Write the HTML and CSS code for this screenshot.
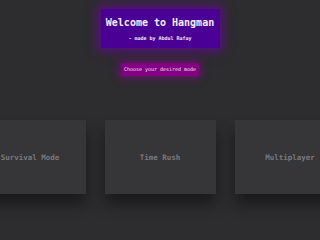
FILE: index.html
```html
<!DOCTYPE html>
<html>
<head>
<meta charset="utf-8">
<link rel="stylesheet" href="styles.css">
</head>
<body>
<header class="header">
  <div class="title-box">
    <h1 class="title">Welcome to Hangman</h1>
    <p class="subtitle">- made by Abdul Rafay</p>
  </div>
  <button class="mode-btn">Choose your desired mode</button>
</header>
<main class="cards">
  <div class="card">Survival Mode</div>
  <div class="card">Time Rush</div>
  <div class="card">Multiplayer</div>
</main>
</body>
</html>
```
FILE: styles.css
```css
html, body {
  margin: 0;
  padding: 0;
  height: 100%;
  overflow: hidden;
}
body {
  background: #2d2c2f;
  font-family: "DejaVu Sans Mono", "Liberation Mono", monospace;
}
.header {
  display: flex;
  flex-direction: column;
  align-items: center;
  padding-top: 9px;
}
.title-box {
  width: 119px;
  height: 39px;
  box-sizing: border-box;
  background: #4a0094;
  box-shadow: 0 0 10px 3px rgba(110, 0, 170, 0.7);
  display: flex;
  flex-direction: column;
  align-items: center;
  padding-top: 8px;
}
.title {
  margin: 0;
  font-size: 10px;
  line-height: 12px;
  font-weight: bold;
  color: #f4eef8;
}
.subtitle {
  margin: 6px 0 0;
  font-size: 5px;
  line-height: 6px;
  font-weight: bold;
  color: #f0e8f4;
}
.mode-btn {
  margin-top: 15px;
  height: 13px;
  padding: 0 3px;
  border: none;
  background: #830085;
  color: #f2e6f2;
  font-family: inherit;
  font-size: 5px;
  line-height: 13px;
  box-shadow: 0 0 8px 2px rgba(140, 0, 150, 0.6);
}
.cards {
  display: flex;
  justify-content: center;
  gap: 19px;
  margin-top: 44px;
}
.card {
  flex: 0 0 111px;
  height: 74px;
  background: #363538;
  box-shadow: 0 10px 14px rgba(0, 0, 0, 0.45);
  display: flex;
  align-items: center;
  justify-content: center;
  color: #7a797c;
  font-size: 7.5px;
  font-weight: bold;
}
```
